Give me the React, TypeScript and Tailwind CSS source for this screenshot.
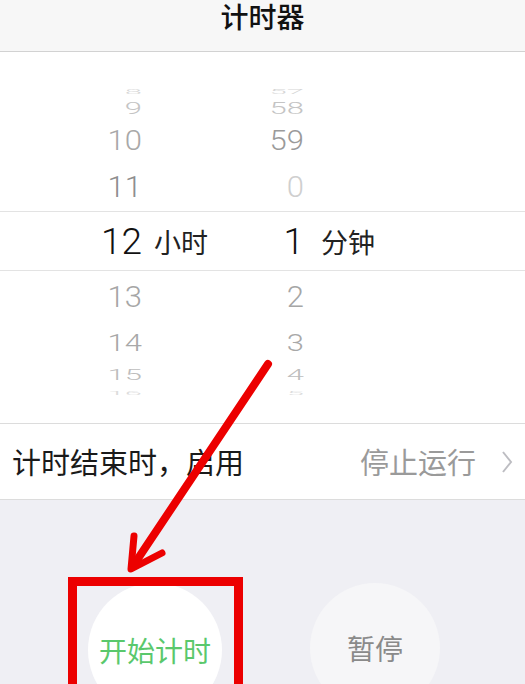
import React from "react";

const digitFont = "font-['Roboto','Liberation_Sans',sans-serif] font-light";
const cjkFont = "font-['Noto_Sans_CJK_SC','Noto_Sans',sans-serif]";

type WheelRow = {
  h: string;
  m: string;
  height: string;
  scale: string;
  hColor: string;
  mColor: string;
};

const above: WheelRow[] = [
  { h: "8", m: "57", height: "h-[14px]", scale: "scale-y-[0.25]", hColor: "text-[#d6d6d6]", mColor: "text-[#d6d6d6]" },
  { h: "9", m: "58", height: "h-[20px]", scale: "scale-y-[0.55]", hColor: "text-[#c4c4c4]", mColor: "text-[#c4c4c4]" },
  { h: "10", m: "59", height: "h-[44px]", scale: "scale-y-[0.88]", hColor: "text-[#a8a8a8]", mColor: "text-[#9a9a9a]" },
  { h: "11", m: "0", height: "h-[49px]", scale: "scale-y-[0.98]", hColor: "text-[#8e8e8e]", mColor: "text-[#cfcfcf]" },
];

const below: WheelRow[] = [
  { h: "13", m: "2", height: "h-[51px]", scale: "scale-y-[0.96]", hColor: "text-[#a6a6a6]", mColor: "text-[#a6a6a6]" },
  { h: "14", m: "3", height: "h-[40px]", scale: "scale-y-[0.78]", hColor: "text-[#a8a8a8]", mColor: "text-[#a8a8a8]" },
  { h: "15", m: "4", height: "h-[24px]", scale: "scale-y-[0.5]", hColor: "text-[#bdbdbd]", mColor: "text-[#bdbdbd]" },
  { h: "16", m: "5", height: "h-[12px]", scale: "scale-y-[0.2]", hColor: "text-[#dcdcdc]", mColor: "text-[#dcdcdc]" },
];

function Row({ row }: { row: WheelRow }) {
  return (
    <div className={`${row.height} flex items-center overflow-hidden`}>
      <div className={`w-[142px] text-right text-[31px] leading-none ${digitFont} ${row.scale} ${row.hColor}`}>
        {row.h}
      </div>
      <div className={`w-[162px] text-right text-[31px] leading-none ${digitFont} ${row.scale} ${row.mColor}`}>
        {row.m}
      </div>
    </div>
  );
}

export default function App() {
  return (
    <div className="relative w-[525px] h-[684px] overflow-hidden bg-[#efeff4] flex flex-col">
      {/* nav bar, partly scrolled off */}
      <header className="h-[52px] flex-shrink-0 bg-[#f7f7f7] border-b border-[#d2d2d2] flex justify-center">
        <h1 className={`${cjkFont} text-[28px] leading-[32px] font-medium text-[#111]`}>计时器</h1>
      </header>

      {/* picker wheel */}
      <section className="h-[371px] flex-shrink-0 bg-white flex flex-col">
        <div className="h-[32px]" />
        {above.map((r) => (
          <Row key={r.h} row={r} />
        ))}
        <div className="h-[60px] border-y border-[#e3e3e3] flex items-center">
          <div className={`w-[142px] text-right text-[37px] leading-none text-[#111] ${digitFont}`}>12</div>
          <div className="w-[162px] flex items-center">
            <span className={`ml-[12px] text-[27px] leading-none text-[#222] ${cjkFont}`}>小时</span>
            <span className={`ml-auto text-[37px] leading-none text-[#111] ${digitFont}`}>1</span>
          </div>
          <span className={`ml-[17px] text-[27px] leading-none text-[#222] ${cjkFont}`}>分钟</span>
        </div>
        {below.map((r) => (
          <Row key={r.h} row={r} />
        ))}
      </section>

      {/* when timer ends */}
      <div className="h-[77px] flex-shrink-0 bg-white border-y border-[#dcdcdc] flex items-center pl-[12px] pr-[12px]">
        <span className={`${cjkFont} text-[29px] leading-none text-[#1a1a1a]`}>计时结束时，启用</span>
        <span className={`ml-auto ${cjkFont} text-[29px] leading-none text-[#9a9a9a]`}>停止运行</span>
        <svg width="12" height="24" viewBox="0 0 12 24" className="ml-[25px]">
          <polyline points="2,2 10,12 2,22" fill="none" stroke="#bdbdc2" strokeWidth="2" />
        </svg>
      </div>

      {/* buttons */}
      <div className="flex-1 flex items-start pt-[83px] pl-[88px] gap-[88px]">
        <button className="w-[134px] h-[134px] rounded-full bg-white flex items-center justify-center">
          <span className={`${cjkFont} text-[28px] leading-none text-[#5ac86c]`}>开始计时</span>
        </button>
        <button className="w-[130px] h-[130px] rounded-full bg-[#f6f6f8] flex items-center justify-center">
          <span className={`${cjkFont} text-[28px] leading-none text-[#8a8a8a]`}>暂停</span>
        </button>
      </div>

      {/* annotation: red box */}
      <div className="absolute left-[68px] top-[577px] w-[175px] h-[140px] border-[9px] border-[#ec0000] pointer-events-none" />

      {/* annotation: red arrow */}
      <svg className="absolute inset-0 pointer-events-none" width="525" height="684" viewBox="0 0 525 684">
        <g stroke="#ec0000" strokeWidth="8" strokeLinecap="round" strokeLinejoin="round" fill="none">
          <line x1="268" y1="364" x2="133" y2="566" />
          <polyline points="134,536 131,569 162,553" strokeWidth="7" />
        </g>
      </svg>
    </div>
  );
}
